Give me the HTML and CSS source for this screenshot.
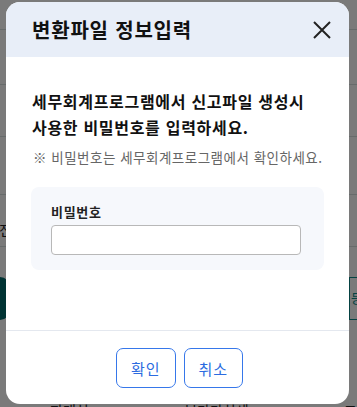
FILE: index.html
```html
<!DOCTYPE html>
<html lang="ko">
<head>
    <meta charset="utf-8">
    <title>변환파일 정보입력</title>
    <link rel="stylesheet" href="styles.css">
</head>
<body>
    <div class="page">
        <div class="row" style="height: 30px"></div>
        <div class="row" style="height: 55px"></div>
        <div class="row" style="height: 52px"></div>
        <div class="row" style="height: 58px"></div>
        <div class="row row-text" style="height: 52px"><span>전</span></div>
        <div class="actions">
            <span class="pill"></span>
            <span class="outline">등</span>
        </div>
        <div class="foot-row">
            <span>판매처</span><span>부가가치세</span><span>고</span>
        </div>
    </div>

    <div class="overlay"></div>

    <div class="modal">
        <div class="modal-head">
            <h1>변환파일 정보입력</h1>
            <button class="close" type="button" aria-label="닫기">
                <svg width="18" height="18" viewBox="0 0 18 18">
                    <path d="M1 1 L17 17 M17 1 L1 17" stroke="#222" stroke-width="2" fill="none"/>
                </svg>
            </button>
        </div>
        <div class="modal-body">
            <p class="lead">세무회계프로그램에서 신고파일 생성시<br>사용한 비밀번호를 입력하세요.</p>
            <p class="note">※ 비밀번호는 세무회계프로그램에서 확인하세요.</p>
            <div class="field-box">
                <label for="pw">비밀번호</label>
                <input type="password" id="pw">
            </div>
        </div>
        <div class="modal-foot">
            <button type="button" class="btn">확인</button>
            <button type="button" class="btn">취소</button>
        </div>
    </div>
</body>
</html>
```

FILE: styles.css
```css
html,body{
    margin: 0;
    padding: 0;
    width: 357px;
    height: 407px;
    overflow: hidden;
    font-family: "Noto Sans CJK KR", "Noto Sans", sans-serif;
    background: #fff;
}

.page{
    width: 357px;
    overflow: hidden;
}
.row{
    border-bottom: 1px solid #d8e0e0;
    box-sizing: border-box;
}
.row-text{
    display: flex;
    align-items: center;
    font-size: 15px;
    color: #222;
}
.row-text span{
    margin-left: -1px;
    padding-top: 18px;
}
.actions{
    display: flex;
    justify-content: space-between;
    margin-top: 30px;
    height: 43px;
}
.pill{
    width: 60px;
    margin-left: -50px;
    background: #006b6b;
    border-radius: 10px;
}
.outline{
    width: 20px;
    margin-right: -12px;
    border: 1px solid #0b8a8a;
    color: #0b8a8a;
    font-size: 13px;
    padding: 10px 0 0 1px;
    box-sizing: border-box;
    overflow: hidden;
}
.foot-row{
    display: flex;
    justify-content: space-between;
    margin-top: 80px;
    padding: 0 0 0 50px;
    font-size: 14px;
    color: #222;
}

.overlay{
    position: absolute;
    left: 0;
    top: 0;
    width: 357px;
    height: 407px;
    background: rgba(0,0,0,0.52);
}

.modal{
    position: absolute;
    left: 6px;
    top: 2px;
    width: 343px;
    height: 402px;
    background: #fff;
    border-radius: 14px;
    overflow: hidden;
    display: flex;
    flex-direction: column;
}
.modal-head{
    height: 55px;
    background: #e8eef8;
    display: flex;
    align-items: center;
    justify-content: space-between;
    padding: 0 18px 0 26px;
}
.modal-head h1{
    margin: 0;
    font-size: 20px;
    letter-spacing: 0.8px;
    font-weight: 700;
    color: #111;
}
.close{
    border: none;
    background: none;
    padding: 0;
    width: 18px;
    height: 18px;
    display: flex;
    cursor: pointer;
}

.modal-body{
    height: 274px;
    box-sizing: border-box;
    padding: 31px 25px 0 25px;
    border-bottom: 1px solid #e4e8ef;
}
.lead{
    margin: 0;
    font-size: 16px;
    letter-spacing: 0.7px;
    line-height: 26px;
    font-weight: 700;
    color: #111;
    padding-left: 1px;
}
.note{
    margin: 7px 0 0 0;
    font-size: 13.5px;
    letter-spacing: 0.5px;
    line-height: 20px;
    color: #666;
    padding-left: 2px;
}
.field-box{
    margin-top: 20px;
    background: #f6f8fc;
    border-radius: 8px;
    padding: 16px 20px 15px 20px;
}
.field-box label{
    display: block;
    font-size: 13px;
    letter-spacing: 0.7px;
    line-height: 18px;
    font-weight: 700;
    color: #222;
    margin-bottom: 4px;
}
.field-box input{
    display: block;
    width: 250px;
    height: 30px;
    box-sizing: border-box;
    border: 1px solid #b8b8b8;
    border-radius: 4px;
    background: #fff;
    outline: none;
}

.modal-foot{
    display: flex;
    justify-content: center;
    gap: 8px;
    padding: 17px 0 0 4px;
}
.btn{
    height: 40px;
    padding: 0 14px;
    background: #fff;
    border: 1px solid #3677ea;
    border-radius: 7px;
    color: #2b6be0;
    font-family: inherit;
    font-size: 15px;
    letter-spacing: 1px;
    cursor: pointer;
}
```
